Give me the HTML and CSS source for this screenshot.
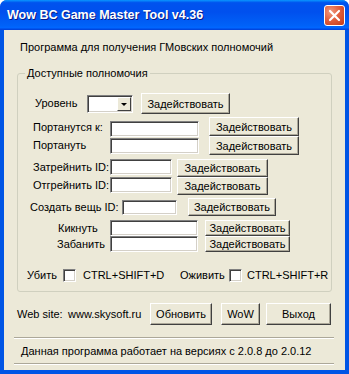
FILE: index.html
```html
<!DOCTYPE html>
<html lang="ru">
<head>
  <meta charset="UTF-8">
  <title>Wow BC Game Master Tool v4.36</title>
  <link rel="stylesheet" href="styles.css">
</head>
<body>
  <div class="window">
    <div class="titlebar">
      <span class="title">Wow BC Game Master Tool v4.36</span>
      <span class="close">
        <svg width="13" height="13" viewBox="0 0 13 13"><path d="M2 2 L11 11 M11 2 L2 11" stroke="#fff" stroke-width="2.2" stroke-linecap="round"/></svg>
      </span>
    </div>

    <div class="client">
      <div class="intro">Программа для получения ГМовских полномочий</div>

      <fieldset class="group">
        <legend>Доступные полномочия</legend>

        <div class="row row-level">
          <span class="lbl" style="margin-left:17px;width:52px">Уровень</span>
          <span class="combo"><span class="combo-btn"><i></i></span></span>
          <button class="btn" style="margin-left:8px;width:89px">Задействовать</button>
        </div>

        <div class="row row-a">
          <span class="lbl" style="margin-left:15px;width:77px">Портанутся к:</span>
          <span class="field" style="width:89px"></span>
          <button class="btn" style="margin-left:10px;width:90px">Задействовать</button>
        </div>

        <div class="row row-b">
          <span class="lbl" style="margin-left:15px;width:77px">Портануть</span>
          <span class="field" style="width:89px"></span>
          <button class="btn" style="margin-left:10px;width:90px">Задействовать</button>
        </div>

        <div class="row row-c">
          <span class="lbl" style="margin-left:15px;width:77px">Затрейнить ID:</span>
          <span class="field" style="width:62px"></span>
          <button class="btn" style="margin-left:5px;width:91px">Задействовать</button>
        </div>

        <div class="row row-c">
          <span class="lbl" style="margin-left:15px;width:77px">Отгрейнить ID:</span>
          <span class="field" style="width:62px"></span>
          <button class="btn" style="margin-left:5px;width:91px">Задействовать</button>
        </div>

        <div class="row row-d">
          <span class="lbl" style="margin-left:12px;width:92px">Создать вещь ID:</span>
          <span class="field" style="width:55px"></span>
          <button class="btn" style="margin-left:11px;width:88px">Задействовать</button>
        </div>

        <div class="row row-e">
          <span class="lbl" style="margin-left:40px;width:52px">Кикнуть</span>
          <span class="field" style="width:88px"></span>
          <button class="btn" style="margin-left:7px;width:85px">Задействовать</button>
        </div>

        <div class="row row-e">
          <span class="lbl" style="margin-left:39px;width:53px">Забанить</span>
          <span class="field" style="width:88px"></span>
          <button class="btn" style="margin-left:7px;width:85px">Задействовать</button>
        </div>

        <div class="row row-check">
          <span class="lbl" style="margin-left:9px;width:36px">Убить</span>
          <span class="check"></span>
          <span class="lbl" style="margin-left:7px;width:97px">CTRL+SHIFT+D</span>
          <span class="lbl" style="width:49px">Оживить</span>
          <span class="check"></span>
          <span class="lbl" style="margin-left:5px">CTRL+SHIFT+R</span>
        </div>
      </fieldset>

      <div class="bottom">
        <span class="lbl" style="width:51px">Web site:</span>
        <span class="lbl" style="width:82px">www.skysoft.ru</span>
        <button class="btn big" style="width:62px">Обновить</button>
        <button class="btn big" style="margin-left:9px;width:39px">WoW</button>
        <button class="btn big" style="margin-left:6px;width:65px">Выход</button>
      </div>

      <div class="sep"></div>
      <div class="note">Данная программа работает на версиях с 2.0.8 до 2.0.12</div>
      <div class="sep"></div>
    </div>
  </div>
</body>
</html>
```

FILE: styles.css
```css
body {
  margin: 0;
  width: 349px;
  height: 374px;
  overflow: hidden;
  font-family: 'Liberation Sans', Arial, sans-serif;
  font-size: 11px;
  color: #000;
}

.window {
  width: 349px;
  height: 374px;
  box-sizing: border-box;
  background: #0055e5;
  border-radius: 7px 7px 0 0;
  display: flex;
  flex-direction: column;
}

.titlebar {
  height: 30px;
  flex: none;
  display: flex;
  align-items: flex-start;
  border-radius: 7px 7px 0 0;
  background: linear-gradient(to bottom, #0997ff 0%, #0053ee 9%, #0050ee 40%, #0062f8 85%, #0066ff 92%, #003dd7 100%);
}

.title {
  margin: 8px 0 0 7px;
  font-weight: bold;
  font-size: 12.5px;
  color: #fff;
  text-shadow: 1px 1px 0 #0a1883;
}

.close {
  margin: 5px 4px 0 auto;
  width: 21px;
  height: 21px;
  box-sizing: border-box;
  border: 1px solid #fff;
  border-radius: 3px;
  background: radial-gradient(circle at 30% 30%, #f09a80 0%, #e2603f 45%, #c53a17 100%);
  display: flex;
  align-items: center;
  justify-content: center;
}

.client {
  flex: 1;
  margin: 0 4px 4px 4px;
  background: #ece9d8;
}

.intro {
  margin: 11px 0 0 16px;
  line-height: 13px;
}

.group {
  margin: 13px 0 0 13px;
  width: 315px;
  box-sizing: border-box;
  padding: 0 0 9px 0;
  border: 1px solid #d0d0bf;
  border-radius: 3px;
}

.group legend {
  margin-left: 7px;
  padding: 0 2px;
  line-height: 13px;
}

.row {
  display: flex;
  align-items: flex-start;
}

.lbl {
  display: inline-block;
  white-space: nowrap;
  line-height: 13px;
  flex: none;
}

.row-level { height: 22px; margin-top: 13px; }
.row-level .lbl { margin-top: 4px; }
.row-level .combo { margin-top: 2px; }

.row-a { height: 19px; margin-top: 2px; }
.row-a .lbl { margin-top: 4px; }
.row-a .field { margin-top: 4px; }

.row-b { height: 19px; }
.row-b .lbl { margin-top: 3px; }
.row-b .field { margin-top: 2px; }

.row-c { height: 18px; }
.row-c:nth-of-type(4) { margin-top: 4px; }
.row-c .lbl { margin-top: 2px; }

.row-d { height: 18px; margin-top: 3px; }
.row-d .lbl { margin-top: 3px; }
.row-d .field { margin-top: 2px; height: 15px; }

.row-e { height: 16px; }
.row-e:nth-of-type(7) { margin-top: 4px; }
.row-e .lbl { margin-top: 2px; }

.row-check {
  margin-top: 16px;
  height: 14px;
  align-items: center;
}

.field {
  display: inline-block;
  height: 16px;
  box-sizing: border-box;
  flex: none;
  background: #fff;
  border-top: 1px solid #808080;
  border-left: 1px solid #808080;
  border-right: 1px solid #fff;
  border-bottom: 1px solid #fff;
  box-shadow: inset 1px 1px 0 #404040, inset -1px -1px 0 #d4d0c8;
}

.combo {
  display: inline-flex;
  justify-content: flex-end;
  width: 46px;
  height: 18px;
  box-sizing: border-box;
  flex: none;
  background: #fff;
  border-top: 1px solid #808080;
  border-left: 1px solid #808080;
  border-right: 1px solid #fff;
  border-bottom: 1px solid #fff;
  box-shadow: inset 1px 1px 0 #404040, inset -1px -1px 0 #d4d0c8;
  padding: 1px;
}

.combo-btn {
  width: 14px;
  box-sizing: border-box;
  background: #ece9d8;
  border-top: 1px solid #fff;
  border-left: 1px solid #fff;
  border-right: 1px solid #404040;
  border-bottom: 1px solid #404040;
  display: flex;
  align-items: center;
  justify-content: center;
}

.combo-btn i {
  width: 0;
  height: 0;
  border-left: 3px solid transparent;
  border-right: 3px solid transparent;
  border-top: 3px solid #000;
}

.check {
  display: inline-block;
  width: 13px;
  height: 13px;
  box-sizing: border-box;
  flex: none;
  background: #fff;
  border-top: 1px solid #808080;
  border-left: 1px solid #808080;
  border-right: 1px solid #fff;
  border-bottom: 1px solid #fff;
  box-shadow: inset 1px 1px 0 #404040, inset -1px -1px 0 #d4d0c8;
}

.btn {
  flex: none;
  height: 19px;
  box-sizing: border-box;
  padding: 0;
  font-family: 'Liberation Sans', Arial, sans-serif;
  font-size: 11px;
  color: #000;
  background: #ece9d8;
  border-top: 1px solid #fff;
  border-left: 1px solid #fff;
  border-right: 1px solid #404040;
  border-bottom: 1px solid #404040;
  box-shadow: inset -1px -1px 0 #aca899;
  border-radius: 0;
}

.row-level .btn { height: 21px; }
.row-c .btn, .row-d .btn { height: 18px; }
.row-e .btn { height: 16px; }

.bottom {
  display: flex;
  align-items: center;
  margin: 11px 0 0 13px;
  height: 22px;
}

.btn.big { height: 22px; }

.sep {
  margin: 0 11px 0 10px;
  height: 0;
  border-top: 1px solid #aca899;
  border-bottom: 1px solid #fff;
}

.bottom + .sep { margin-top: 12px; }

.note {
  margin: 6px 0 5px 17px;
  line-height: 13px;
}
```
